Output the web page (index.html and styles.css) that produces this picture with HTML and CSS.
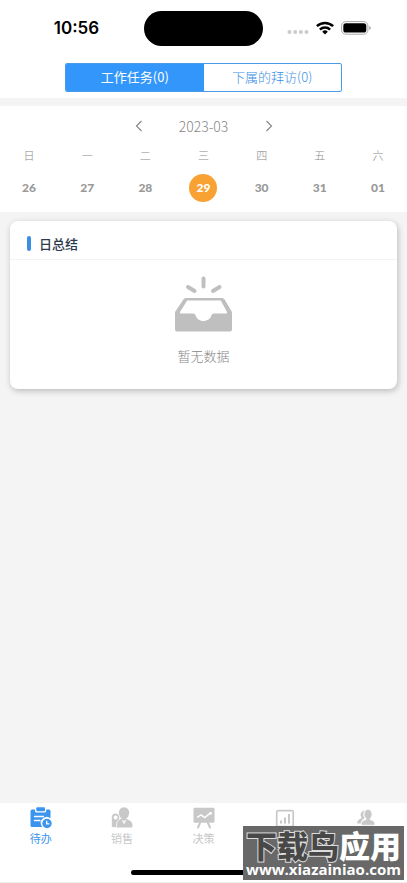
FILE: index.html
```html
<!DOCTYPE html>
<html lang="zh-CN">
<head>
<meta charset="utf-8">
<meta name="viewport" content="width=device-width, initial-scale=1">
<title>工作任务</title>
<link rel="stylesheet" href="styles.css">
</head>
<body>
<div class="app">
  <header class="header">
    <div class="status">
      <span class="time">10:56</span>
      <span class="island"></span>
      <span class="signals">
        <svg width="22" height="6" viewBox="0 0 22 6" fill="#ccc"><circle cx="2.500" cy="3" r="2"/><circle cx="8.200" cy="3" r="2"/><circle cx="13.900" cy="3" r="2"/><circle cx="19.500" cy="3" r="2"/></svg>
        <svg class="wifi" width="18" height="14" viewBox="0 0 18 14" fill="none" stroke="#000" stroke-width="2.500"><path d="M.9 5.200a11.600 11.600 0 0 1 16.200 0"/><path d="M3.900 8.600a7.200 7.200 0 0 1 10.200 0"/><path d="M9 13.500 6.200 10.700a4 4 0 0 1 5.600 0z" fill="#000" stroke="none"/></svg>
        <svg width="30" height="14" viewBox="0 0 30 14"><rect x=".6" y=".6" width="26.300" height="12.600" rx="4.200" fill="none" stroke="#aaa"/><rect x="2.300" y="2.300" width="23" height="9.300" rx="2.600"/><path d="M28.200 5v4q1.600-.5 1.600-2t-1.600-2" fill="#aaa"/></svg>
      </span>
    </div>
    <div class="segments">
      <button class="segment active" type="button">工作任务(0)</button>
      <button class="segment" type="button">下属的拜访(0)</button>
    </div>
  </header>

  <section class="calendar">
    <div class="month">
      <button class="arrow" type="button" aria-label="上个月"><svg width="8" height="12" viewBox="0 0 8 12"><path d="M6.500 1 1.500 6l5 5"/></svg></button>
      <span class="month-name">2023-03</span>
      <button class="arrow" type="button" aria-label="下个月"><svg width="8" height="12" viewBox="0 0 8 12"><path d="m1.500 1 5 5-5 5"/></svg></button>
    </div>
    <table class="week">
      <thead><tr><th>日</th><th>一</th><th>二</th><th>三</th><th>四</th><th>五</th><th>六</th></tr></thead>
      <tbody><tr>
        <td><button class="day" type="button">26</button></td>
        <td><button class="day" type="button">27</button></td>
        <td><button class="day" type="button">28</button></td>
        <td><button class="day selected" type="button">29</button></td>
        <td><button class="day" type="button">30</button></td>
        <td><button class="day" type="button">31</button></td>
        <td><button class="day" type="button">01</button></td>
      </tr></tbody>
    </table>
  </section>

  <main class="content">
    <section class="card">
      <h2 class="card-title">日总结</h2>
      <div class="empty">
        <svg width="58" height="56" viewBox="0 0 58 56">
          <g stroke="#bfbfbf" stroke-width="4" stroke-linecap="round"><path d="M28.500 2.500v8M13 11l6.500 4M44.500 11 38 15"/></g>
          <path fill="#bfbfbf" fill-rule="evenodd" d="M11 22h36q1.700 0 2.600 1.500L57 36v17.500q0 2-2 2H2q-2 0-2-2V36l8.400-12.500Q9.300 22 11 22zm1.200 2.500L5 36q-.6 1.600 1.200 1.600h12.100q1.500 0 2.300 1.900c1.200 3.200 3.900 5.500 7.900 5.500s6.700-2.300 7.900-5.500q.8-1.900 2.300-1.900h12.100q1.800 0 1.200-1.600l-6.200-11.500z"/>
        </svg>
        <p class="empty-text">暂无数据</p>
      </div>
    </section>
  </main>

  <nav class="tabs">
    <a class="tab current" href="#todo">
      <svg width="22" height="22" viewBox="0 0 22 22"><path fill="currentColor" d="M2 2.500h3V4q0 1.600 1.600 1.600h8Q16.200 5.600 16.200 4V2.500H19q1.500 0 1.500 1.500v7.300a6 6 0 0 0-8.800 7.900l.5.800H2Q.5 20 .5 18.500V4Q.5 2.500 2 2.500z"/><rect x="6.300" y=".3" width="8.700" height="4" rx="1" fill="currentColor"/><path d="M4.500 9.500h9M4.500 13.500h5.500" stroke="#fff" stroke-width="1.300" stroke-linecap="round"/><circle cx="17" cy="16.500" r="4.700" fill="currentColor"/><path d="M16.700 13.800v3h2.700" fill="none" stroke="#fff" stroke-width="1.300"/></svg>
      <span>待办</span>
    </a>
    <a class="tab" href="#sales">
      <svg width="22" height="22" viewBox="0 0 22 22" fill="currentColor"><path d="M7.800 5.500a5.200 5.300 0 0 1 10.400 0c0 3-1.700 5.300-3.200 6.200l2 1q4.600 1.300 4.600 6.300 0 1.500-1.500 1.500H5.500v-5l3.500-3.500 2-.3C9.300 10.500 7.800 8.500 7.800 5.500z"/><path d="m11 12.800 1.700 4.700.3-3.500zM15.200 12.800l-1.700 4.700-.4-3.500z" fill="#fff"/><path d="M4.500 6.300a4.200 4.200 0 0 1 4.200 4.200c0 2.500-2.600 3.500-3 5.500v3q0 1.500-1.500 1.500H2q-1.500 0-1.500-1.500v-8.500a4.200 4.200 0 0 1 4-4.200z" stroke="#fff" stroke-width=".7"/><circle cx="4.600" cy="10.500" r="2" fill="#fff"/></svg>
      <span>销售</span>
    </a>
    <a class="tab" href="#decision">
      <svg width="22" height="22" viewBox="0 0 22 22"><rect x=".5" y=".8" width="21" height="15" rx="1.200" fill="currentColor"/><path d="m7 16-2 4.500M15 16l2 4.500" stroke="currentColor" stroke-width="2" stroke-linecap="round"/><path d="m4 10.500 4-2.700 3.700 2.700 5.800-4.500" fill="none" stroke="#fff" stroke-width="1.500"/><circle cx="17.500" cy="6.300" r="1.500" fill="#fff"/></svg>
      <span>决策</span>
    </a>
    <a class="tab" href="#report" aria-label="报表">
      <svg width="22" height="22" viewBox="0 0 22 22" fill="none" stroke="currentColor"><rect x="2.700" y="3.700" width="16.500" height="16" rx="1.500" stroke-width="1.700"/><path d="M7 13.500v3M11 10.500v6M15 7v9.500" stroke-width="2"/></svg>
    </a>
    <a class="tab" href="#mine" aria-label="我的">
      <svg width="22" height="22" viewBox="0 0 22 22" fill="currentColor"><path d="M6.700 5a3 3 0 0 1 3-1.500C7.700 5.500 8 9 9.500 11c-2 1.800-3.500 3-3.800 5.500H3q-1 0-.7-1.500c.4-2 2.200-3 3.900-3.600l.3-1.200C5 8.500 5.400 6.300 6.700 5z"/><path d="M9.200 7c0-6 7.700-6 7.700 0 0 2.200-.8 3.700-2 4.700l.3 1c2.300.8 4.700 1.500 4.700 4.500q0 1-1 1H7.200q-1 0-1-1c0-3 2.400-3.700 4.700-4.500l.3-1c-1.200-1-2-2.500-2-4.700z" stroke="#fff" stroke-width=".5"/></svg>
    </a>
    <span class="home-bar"></span>
    <div class="watermark">
      <div class="mark-name"><span class="mark-dark">下载鸟</span>应用</div>
      <div class="mark-url">www.xiazainiao.com</div>
    </div>
  </nav>
</div>
</body>
</html>
```
FILE: styles.css
```css
* { box-sizing: border-box; }

body {
  margin: 0;
  background: #f4f4f4;
  color: #999;
  font-family: "Noto Sans CJK SC", sans-serif;
  font-size: 13px;
}

button {
  padding: 0;
  border: 0;
  background: none;
  color: inherit;
  font: inherit;
}

svg { display: block; flex-shrink: 0; }

.app {
  display: flex;
  flex-direction: column;
  min-height: 100vh;
}

.header { padding-bottom: 6px; background: #fff; }

.status {
  display: grid;
  grid-template-columns: 1fr 119px 1fr;
  align-items: center;
  height: 63px;
  padding-bottom: 7px;
}

.time {
  padding-left: 9px;
  color: #000;
  font: 600 17px/20px Inter, sans-serif;
  text-align: center;
}

.island { height: 35px; border-radius: 18px; background: #000; }

.signals {
  display: flex;
  align-items: center;
  justify-content: flex-end;
  gap: 7px;
  padding-right: 36px;
}

.signals svg:first-child { margin-top: 8px; }

.segments {
  display: flex;
  width: 68%;
  height: 29px;
  margin: 0 auto;
  overflow: hidden;
  border: 1px solid #4a9be8;
  border-radius: 2px;
}

.segment { flex: 1; padding-bottom: 2px; color: #3a8fe4; font-weight: 300; line-height: 25px; }
.segment.active { background: #3296fa; color: #fff; font-weight: 400; }

.calendar {
  margin-top: 8px;
  padding: 10px 0;
  background: #fff;
}

.month {
  display: flex;
  align-items: center;
  justify-content: center;
  gap: 30px;
  height: 20px;
}

.arrow { display: grid; place-items: center; width: 20px; height: 20px; }
.arrow path { fill: none; stroke: #888; stroke-width: 1.2; }
.month-name { width: 50px; font-size: 14px; font-weight: 300; line-height: 20px; text-align: center; white-space: nowrap; color: #888; }

.week {
  width: 100%;
  border-collapse: collapse;
  table-layout: fixed;
}

.week th { height: 38px; padding: 0; font-size: 11px; font-weight: 300; color: #888; }
.week td { padding: 0; }

.day {
  display: block;
  width: 28px;
  height: 28px;
  margin: 0 auto;
  border-radius: 50%;
  font: 900 12px/28px Lato, sans-serif;
}

.day.selected { background: #f8a233; color: #fff; }

.content { flex: 1; padding: 9px 10px; }

.card {
  border-radius: 8px;
  background: #fff;
  box-shadow: 1px 2px 6px rgba(0, 0, 0, 0.24);
}

.card-title {
  display: flex;
  align-items: center;
  gap: 8px;
  height: 39px;
  margin: 0;
  padding: 6px 17px 0;
  border-bottom: 1px solid #f3f3f3;
  color: #2c3a4e;
  font-size: 13px;
  font-weight: 500;
}

.card-title::before {
  width: 4px;
  height: 15px;
  border-radius: 2px;
  background: #3b8fe2;
  content: "";
}

.empty {
  display: flex;
  flex-direction: column;
  align-items: center;
  gap: 14px;
  padding: 16px 0 23px;
}

.empty-text { margin: 0; font-weight: 300; line-height: 20px; color: #888; }

.tabs {
  position: relative;
  display: flex;
  height: 80px;
  border-bottom: 1px solid #eee;
  background: #fff;
}

.tab {
  display: flex;
  flex: 1;
  flex-direction: column;
  align-items: center;
  padding-top: 4px;
  color: #c8c8c8;
  font-size: 11px;
  line-height: 18px;
  text-decoration: none;
}

.tab.current { color: #3b94ee; }

.home-bar {
  position: absolute;
  bottom: 7px;
  left: 50%;
  width: 145px;
  height: 5px;
  margin-left: -73px;
  border-radius: 3px;
  background: #000;
}

.watermark {
  position: absolute;
  right: 3px;
  bottom: 2px;
  width: 161px;
  height: 54px;
  padding-top: 3px;
  background: #686868;
  color: #fff;
  text-align: center;
  white-space: nowrap;
}

.mark-name { font-size: 31px; font-weight: 900; line-height: 32px; }

.mark-dark {
  color: #484848;
  -webkit-text-stroke: 2px #ddd;
  paint-order: stroke fill;
}

.mark-url { font: 700 15px/17px "Open Sans", sans-serif; }
```
